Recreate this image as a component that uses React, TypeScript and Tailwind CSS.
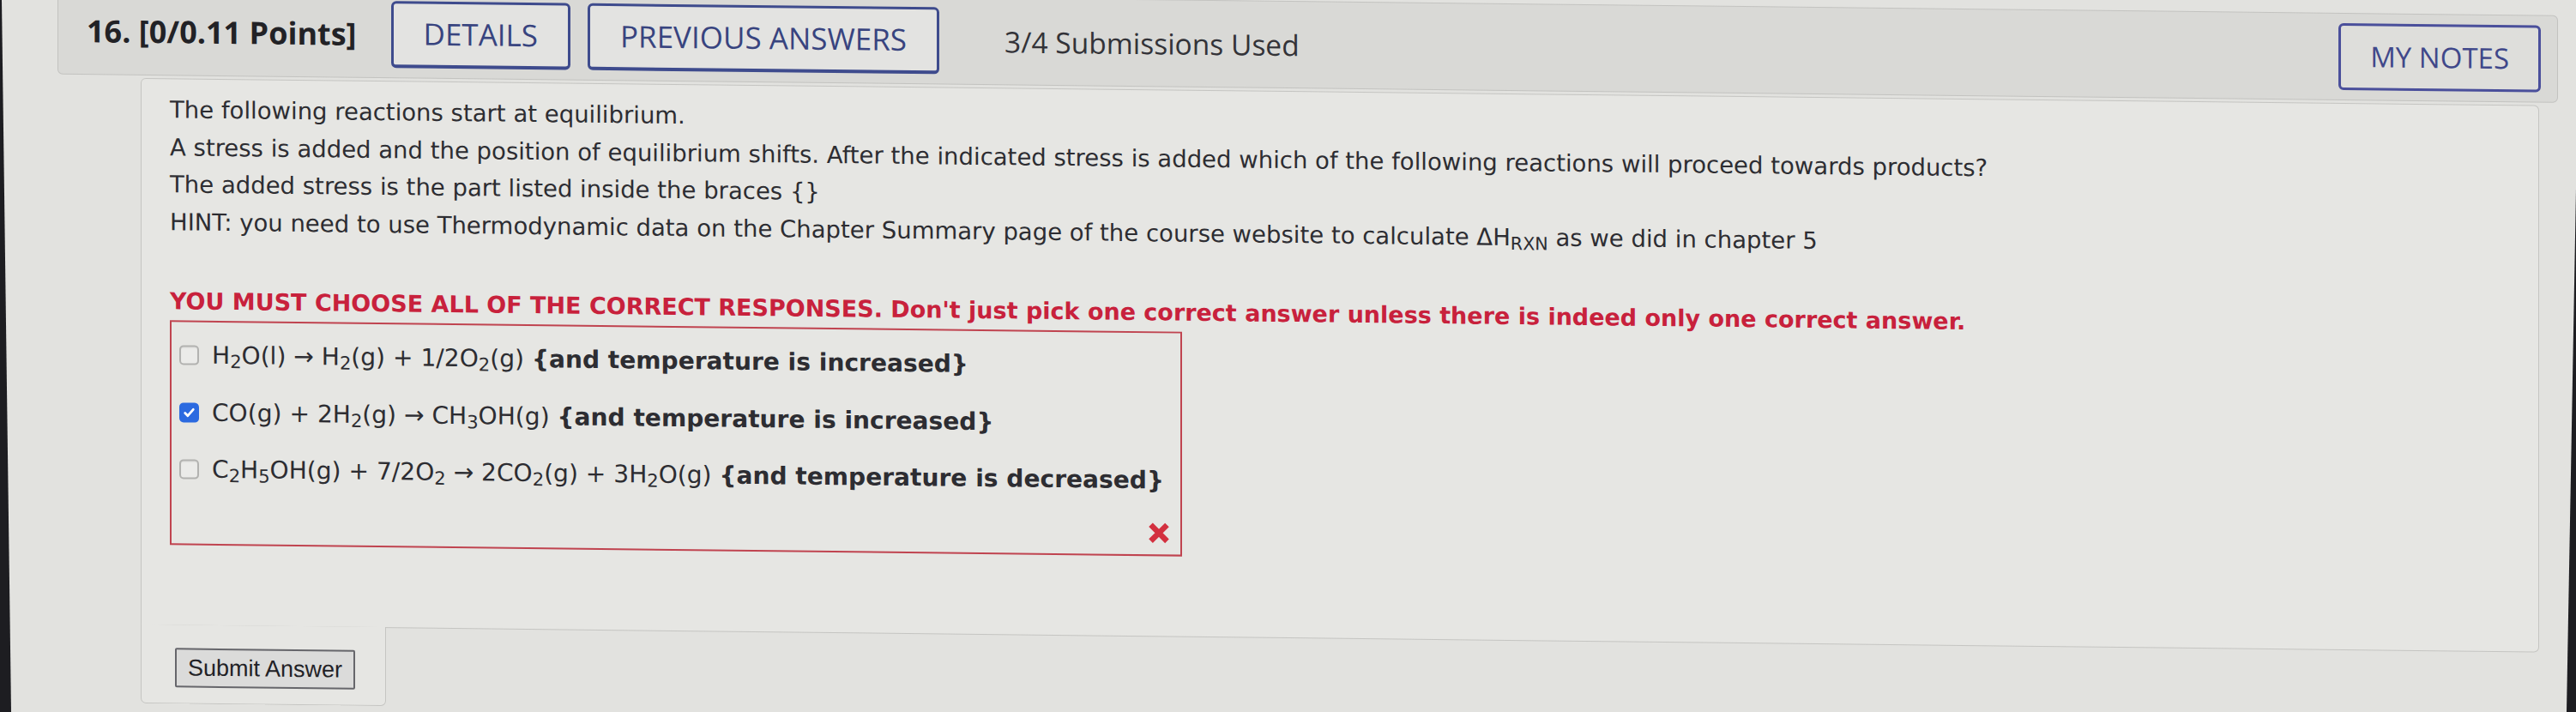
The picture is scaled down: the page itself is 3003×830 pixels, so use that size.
import type { ReactNode } from "react";

type Choice = { checked: boolean; formula: ReactNode; stress: string };

const choices: Choice[] = [
  {
    checked: false,
    formula: (
      <>
        H<sub>2</sub>O(l) → H<sub>2</sub>(g) + 1/2O<sub>2</sub>(g)
      </>
    ),
    stress: "{and temperature is increased}",
  },
  {
    checked: true,
    formula: (
      <>
        CO(g) + 2H<sub>2</sub>(g) → CH<sub>3</sub>OH(g)
      </>
    ),
    stress: "{and temperature is increased}",
  },
  {
    checked: false,
    formula: (
      <>
        C<sub>2</sub>H<sub>5</sub>OH(g) + 7/2O<sub>2</sub> → 2CO<sub>2</sub>(g) + 3H<sub>2</sub>O(g)
      </>
    ),
    stress: "{and temperature is decreased}",
  },
];

function Checkbox({ checked }: { checked: boolean }) {
  if (checked) {
    return (
      <span className="flex h-[23px] w-[23px] shrink-0 items-center justify-center rounded-[5px] bg-[#2b6ae0]">
        <svg viewBox="0 0 16 16" className="h-[17px] w-[17px]" fill="none" stroke="#fff" strokeWidth="2.6" strokeLinecap="round" strokeLinejoin="round">
          <path d="M3.5 8.5l3 3 6-7" />
        </svg>
      </span>
    );
  }
  return <span className="h-[23px] w-[23px] shrink-0 rounded-[5px] border-2 border-[#b2b2b0] bg-[#ebebe9] shadow-[inset_0_1px_1px_rgba(0,0,0,0.08)]" />;
}

function HeaderButton({ children, className = "" }: { children: ReactNode; className?: string }) {
  return (
    <button className={`h-full rounded-[6px] border-[3px] border-b-[4px] border-[#3e4b8d] bg-[#e3e3e1] px-[35px] text-[35px] text-[#38447f] ${className}`}>
      {children}
    </button>
  );
}

export default function App() {
  return (
    <div className="relative h-[830px] w-[3003px] overflow-hidden bg-[#e2e2df]">
      <div className="origin-top-left skew-y-[0.65deg]">
        {/* question header */}
        <header className="-mt-[16px] ml-[67px] mr-[21px] flex h-[102px] rounded-[6px] border border-[#c3c3c0] bg-[#d9d9d6] pl-[33px] pr-[19px] pt-[11px] font-['Open_Sans',sans-serif]">
          <div className="flex h-[78px] flex-1 items-center">
            <span className="text-[36px] font-bold text-[#222226]">16. [0/0.11 Points]</span>
            <HeaderButton className="ml-[40px]">DETAILS</HeaderButton>
            <HeaderButton className="ml-[20px]">PREVIOUS ANSWERS</HeaderButton>
            <span className="ml-[76px] text-[33.5px] text-[#333338]">3/4 Submissions Used</span>
            <button className="ml-auto h-full rounded-[6px] border-[3px] border-[#4a4f9b] bg-[#dededb] px-[34px] text-[33px] text-[#40488a]">
              MY NOTES
            </button>
          </div>
        </header>

        {/* question body */}
        <section className="ml-[164px] mr-[43px] mt-[3px] font-['DejaVu_Sans',Verdana,sans-serif] text-[#2d2d32]">
          <div className="h-[638px] rounded-t-[6px] rounded-br-[6px] border border-[#c5c5c2] bg-[#e6e6e3] pl-[33px] pt-[14px] text-[27.5px] leading-[43.5px]">
            <p>The following reactions start at equilibrium.</p>
            <p>
              A stress is added and the position of equilibrium shifts. After the indicated stress is added which of the following reactions will proceed towards products?
            </p>
            <p>The added stress is the part listed inside the braces {"{}"}</p>
            <p>
              HINT: you need to use Thermodynamic data on the Chapter Summary page of the course website to calculate ΔH<sub>RXN</sub> as we did in chapter 5
            </p>
            <p className="mt-[49px] text-[27px] font-bold text-[#c8213c]">
              YOU MUST CHOOSE ALL OF THE CORRECT RESPONSES. Don't just pick one correct answer unless there is indeed only one correct answer.
            </p>

            <div className="flex h-[262px] w-[1180px] flex-col border-2 border-[#c04450] pl-[9px] pr-[12px] pt-[6px] text-[28.1px]">
              {choices.map((c, i) => (
                <label key={i} className="flex h-[66.5px] items-center gap-[15px] whitespace-nowrap">
                  <Checkbox checked={c.checked} />
                  <span>
                    {c.formula} <b>{c.stress}</b>
                  </span>
                </label>
              ))}
              <div className="mt-[15px] flex justify-end">
                <svg viewBox="0 0 22 22" className="h-[26px] w-[26px]" stroke="#d3303f" strokeWidth="5.5" fill="none">
                  <path d="M3 3l16 16M19 3L3 19" />
                </svg>
              </div>
            </div>
          </div>

          {/* submit tab */}
          <div className="-mt-px h-[92px] w-[286px] rounded-b-[6px] border border-t-0 border-[#c5c5c2] bg-[#e6e6e3] pl-[39px] pt-[27px]">
            <button className="h-[46px] rounded-[2px] border-2 border-[#66666b] bg-[#dbdbda] px-[13px] font-['Liberation_Sans',Arial,sans-serif] text-[27px] text-[#222226]">
              Submit Answer
            </button>
          </div>
        </section>
      </div>

      {/* monitor bezel showing at the photo's edges */}
      <svg className="pointer-events-none absolute inset-0 h-full w-full" viewBox="0 0 3003 830" preserveAspectRatio="none">
        <polygon points="0,0 2,0 13,830 0,830" fill="#1d1d21" />
        <polygon points="3003,220 2992,830 3003,830" fill="#1d1d21" />
      </svg>
    </div>
  );
}
